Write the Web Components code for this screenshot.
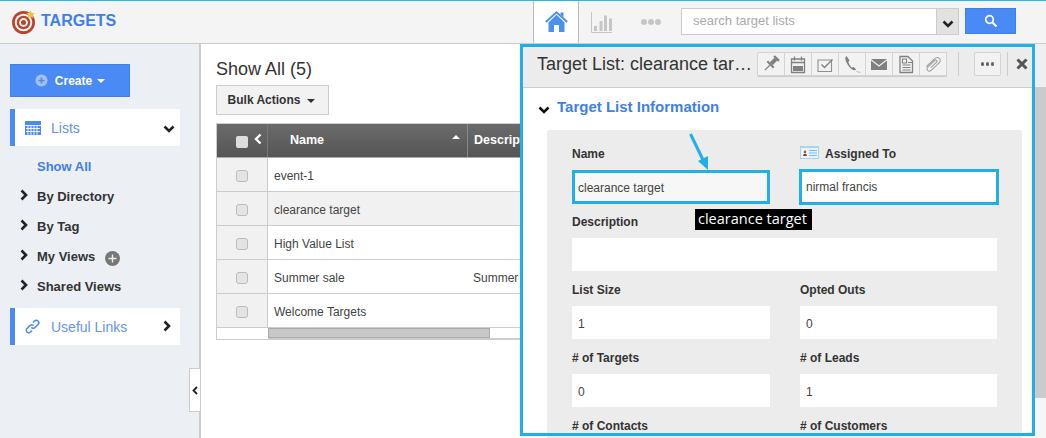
<!DOCTYPE html>
<html>
<head>
<meta charset="utf-8">
<title>Targets</title>
<style>
  html, body { margin: 0; padding: 0; height: 100%; overflow: hidden; background: #fff; }
  body { font-family: "Liberation Sans", Arial, sans-serif; color: #333; }
</style>
</head>
<body>
<crm-app></crm-app>
<script>
const CHEV_DOWN = `<svg width="12" height="8" viewBox="0 0 12 8"><path d="M1.5 1.5 6 6l4.500-4.500" fill="none" stroke="currentColor" stroke-width="2.600"/></svg>`;
const CHEV_RIGHT = `<svg width="8" height="12" viewBox="0 0 8 12"><path d="M1.500 1.500 6 6l-4.500 4.500" fill="none" stroke="currentColor" stroke-width="2.600"/></svg>`;

const ICONS = {
  pin: `<g transform="rotate(45 10 10)" fill="#808080"><rect x="6.500" y="1" width="7" height="2.200"/><rect x="8" y="3.200" width="4" height="6.500"/><rect x="5.500" y="9.700" width="9" height="2"/><rect x="9.400" y="11.700" width="1.200" height="7"/></g>`,
  cal: `<path d="M3.500 5h13v13.500h-13zM6.500 2.500v4M13.500 2.500v4M3.500 8.500h13" fill="none" stroke="#808080" stroke-width="1.300"/><rect x="5" y="12" width="10" height="5" fill="#808080"/>`,
  task: `<path d="M3 6h13.500v11.500H3z" fill="none" stroke="#909090" stroke-width="1.100"/><path d="M6.500 10.500l3 3 8-8" fill="none" stroke="#808080" stroke-width="1.400"/>`,
  phone: `<path d="M4.500 2c-1.500 1-1.500 3-.5 5.500 1.500 3.500 4 7 7 8.500 1.300.6 2.300.4 3.200-.4l-2.700-2.800-1.500 1C8.500 12.500 7 10 6.300 8l1.300-1.500z" fill="#808080"/><path d="M14.500 17.500l4 1" stroke="#bbb" stroke-width="1"/>`,
  mail: `<path d="M2 5h16l-8 6.200z" fill="#808080"/><path d="M2 6.500V16h16V6.500l-8 6.200z" fill="#808080"/>`,
  note: `<path d="M4 2.500h8l4.500 4.500v11.500H4z" fill="none" stroke="#808080" stroke-width="1.300"/><path d="M6.500 5h4v4h-4zM6.500 11h8M6.500 13.500h8M6.500 16h8M12 8.500h4.500" fill="none" stroke="#808080" stroke-width="1.100"/>`,
  clip: `<path d="M3.500 12.500l8-7.500c1.600-1.500 3.800-1.700 5-.6s1 3.300-.6 4.800l-7.500 7c-1.100 1-2.900 1.100-3.800.2s-.7-2.500.4-3.500l6.700-6.300c.7-.6 1.500-.7 2-.2s.4 1.300-.3 2l-5.600 5.300" fill="none" stroke="#a0a0a0" stroke-width="1.100"/>`
};

// shared base: every element only has to hand over its shadow markup
class ShadowEl extends HTMLElement {
  constructor() {
    super();
    this.attachShadow({ mode: "open" });
  }
  connectedCallback() {
    this.shadowRoot.innerHTML = this.markup();
  }
  markup() { return ""; }
}

class CrmApp extends ShadowEl {
  markup() {
    return `<style>
      :host { display: flex; flex-direction: column; width: 1046px; height: 438px; position: relative; overflow: hidden; }
      .below { display: flex; flex: 1; min-height: 0; }
      .gutter { position: absolute; left: 1035px; top: 44px; width: 11px; bottom: 0; background: #f6f6f6; }
      .gutter .cap { height: 43px; background: #efefef; }
      .gutter .thumb { height: 311px; background: #cbcbcb; }
    </style>
    <app-header></app-header>
    <div class="below">
      <side-nav></side-nav>
      <list-view></list-view>
    </div>
    <div class="gutter"><div class="cap"></div><div class="thumb"></div></div>
    <detail-panel></detail-panel>`;
  }
}

class AppHeader extends ShadowEl {
  markup() {
    return `<style>
      :host { display: flex; align-items: stretch; height: 44px; flex: none; box-sizing: border-box; border-top: 1px solid #29b6f0; border-bottom: 1px solid #ccc; background: #f4f4f4; }
      .brand { display: flex; align-items: center; gap: 5px; padding-left: 12px; width: 533px; box-sizing: border-box; font: bold 16px "Liberation Sans", sans-serif; color: #3f7fe8; }
      .brand span { position: relative; top: -1px; }
      .home { width: 46px; box-sizing: border-box; background: #fff; border-left: 1px solid #bbb; border-right: 1px solid #bbb; display: flex; align-items: center; justify-content: center; }
      .chart { margin: 0 0 0 12px; display: flex; align-items: center; }
      .dots { margin-left: 28px; display: flex; gap: 1px; align-items: center; }
      .dots i { width: 6px; height: 6px; border-radius: 50%; background: #c6c6c6; }
      .search { margin: 7px 0 0 20px; width: 278px; height: 27px; box-sizing: border-box; border: 1px solid #ccc; background: #fff; display: flex; font-size: 13px; color: #aaa; }
      .search .q { flex: 1; padding: 0 11px; line-height: 24px; }
      .search .dd { width: 22px; background: #e2e2e2; border-left: 1px solid #ccc; color: #222; display: flex; align-items: center; justify-content: center; padding-top: 4px; box-sizing: border-box; }
      .go { margin: 7px 0 0 6px; width: 51px; height: 26px; box-sizing: border-box; background: #4a8af4; border: 1px solid #3f7fe8; display: flex; align-items: center; justify-content: center; }
    </style>
    <div class="brand">
      <svg width="24" height="24" viewBox="0 0 24 24" style="margin-top:-1px">
        <circle cx="11.500" cy="12.500" r="11.500" fill="#b8452b"/>
        <circle cx="11.500" cy="12.500" r="8.800" fill="#f4f4f4"/>
        <circle cx="11.500" cy="12.500" r="6.800" fill="#b8452b"/>
        <circle cx="11.500" cy="12.500" r="4.400" fill="#f4f4f4"/>
        <circle cx="11.500" cy="12.500" r="2.500" fill="#b8452b"/>
        <path d="M18.500 0l1.200 2.800 3 .4-2.200 2 .6 3-2.600-1.500-2.600 1.500.6-3-2.200-2 3-.4z" fill="#f3c23c"/>
      </svg>
      <span>TARGETS</span>
    </div>
    <div class="home">
      <svg width="23" height="22" viewBox="0 0 23 22"><path d="M3.500 11.500 11.500 3.800 19.500 11.500V21h-5.500v-7H9v7H3.500z" fill="#4a90f0"/><path d="M.8 11 11.500 1.300 22.200 11" fill="none" stroke="#4a90f0" stroke-width="1.800"/><path d="M15.500 1.500h3v5l-3-3z" fill="#4a90f0"/></svg>
    </div>
    <div class="chart">
      <svg width="22" height="21" viewBox="0 0 22 21"><path d="M.5 0v20.500H21" fill="none" stroke="#c6c6c6"/><path d="M3 14h3v5H3zM8.500 9h3v10h-3zM13 3.500h3V19h-3zM18 6.500h3V19h-3z" fill="#c6c6c6"/></svg>
    </div>
    <div class="dots"><i></i><i></i><i></i></div>
    <div class="search"><div class="q">search target lists</div><div class="dd">${CHEV_DOWN}</div></div>
    <div class="go">
      <svg width="14" height="14" viewBox="0 0 14 14"><circle cx="5.500" cy="5.500" r="3.800" fill="none" stroke="#fff" stroke-width="1.800"/><path d="M8.500 8.500l4 4" stroke="#fff" stroke-width="2.200"/></svg>
    </div>`;
  }
}

class NavCard extends ShadowEl {
  markup() {
    return `<style>
      :host { display: flex; align-items: center; height: 37px; width: 170px; box-sizing: border-box; background: #fff; border-left: 5px solid #4a8af4; padding-left: 10px; font-size: 14px; color: #6493f0; }
      .ic { width: 16px; display: flex; }
      .t { flex: 1; margin-left: 10px; }
      .c { color: #222; width: 17px; display: flex; }
    </style>
    <span class="ic"><slot name="icon"></slot></span><span class="t"><slot></slot></span><span class="c"><slot name="caret"></slot></span>`;
  }
}

class NavItem extends ShadowEl {
  markup() {
    return `<style>
      :host { display: flex; align-items: center; height: 30px; font: bold 13px "Liberation Sans", sans-serif; color: #333; padding-left: 20px; }
      .c { width: 17px; display: flex; color: #222; }
      .g { margin: 5px 0 0 10px; display: flex; }
    </style>
    <span class="c"><slot name="caret"></slot></span><slot></slot><span class="g"><slot name="extra"></slot></span>`;
  }
}

class SideNav extends ShadowEl {
  markup() {
    return `<style>
      :host { display: block; width: 201px; flex: none; box-sizing: border-box; background: #eceff4; border-right: 2px solid #ccc; padding: 20px 0 0 10px; position: relative; }
      .create { width: 120px; height: 33px; box-sizing: border-box; background: #4a8af4; border: 1px solid #3f7fe8; color: #fff; font: bold 12px "Liberation Sans", sans-serif; display: flex; align-items: center; justify-content: center; gap: 7px; }
      .tri { width: 0; height: 0; border: 4px solid transparent; border-top-color: #fff; border-bottom: 0; display: inline-block; margin-left: 5px; vertical-align: 2px; }
      nav-card { margin-top: 12px; }
      nav-card.links { margin-top: 7px; }
      .items { margin: 5px 0 0 -10px; }
      .handle { position: absolute; left: 189px; top: 324px; width: 11px; height: 44px; box-sizing: border-box; background: #fff; border: 1px solid #ccc; border-right: 0; display: flex; align-items: center; justify-content: center; color: #222; }
    </style>
    <div class="create">
      <svg width="13" height="13" viewBox="0 0 13 13"><circle cx="6.500" cy="6.500" r="6" fill="#a3c1f7"/><path d="M6.500 3.500v6M3.500 6.500h6" stroke="#4a8af4" stroke-width="1.600"/></svg>
      <span>Create<i class="tri"></i></span>
    </div>
    <nav-card>
      <svg slot="icon" width="16" height="14" viewBox="0 0 16 14"><path d="M0 0h16v14H0z" fill="#4a8af4"/><path d="M0 4.500h16M1 7.500h14M1 10.500h14M3 4v10M6 4v10M9 4v10M12 4v10" stroke="#fff" stroke-width=".9"/></svg>
      Lists
      <span slot="caret">${CHEV_DOWN}</span>
    </nav-card>
    <div class="items">
      <nav-item><span style="color:#3f7fe8">Show All</span></nav-item>
      <nav-item><span slot="caret">${CHEV_RIGHT}</span>By Directory</nav-item>
      <nav-item><span slot="caret">${CHEV_RIGHT}</span>By Tag</nav-item>
      <nav-item><span slot="caret">${CHEV_RIGHT}</span>My Views
        <svg slot="extra" width="15" height="15" viewBox="0 0 15 15"><circle cx="7.500" cy="7.500" r="7.500" fill="#777"/><path d="M7.500 3.500v8M3.500 7.500h8" stroke="#eee" stroke-width="1.400"/></svg>
      </nav-item>
      <nav-item><span slot="caret">${CHEV_RIGHT}</span>Shared Views</nav-item>
    </div>
    <nav-card class="links">
      <svg slot="icon" width="15" height="15" viewBox="0 0 15 15"><path d="M6.500 8.500c1 1 2.500 1 3.500 0l3-3c1-1 1-2.500 0-3.500s-2.500-1-3.500 0L8 3.500M8.500 6.500c-1-1-2.500-1-3.500 0l-3 3c-1 1-1 2.500 0 3.500s2.500 1 3.500 0L7 11.500" fill="none" stroke="#4a8af4" stroke-width="1.600"/></svg>
      Useful Links
      <span slot="caret">${CHEV_RIGHT}</span>
    </nav-card>
    <div class="handle"><svg width="6" height="9" viewBox="0 0 6 9"><path d="M5 1 1.500 4.500 5 8" fill="none" stroke="currentColor" stroke-width="1.800"/></svg></div>`;
  }
}

class TableRow extends ShadowEl {
  markup() {
    const shade = this.hasAttribute("shade");
    return `<style>
      :host { display: grid; grid-template-columns: 51px 200px 1fr; height: 34px; box-sizing: border-box; border-bottom: 1px solid #ccc; font-size: 12px; color: #444; background: ${shade ? "#f1f1f1" : "#fff"}; }
      .chk { background: #f1f1f1; border-right: 1px solid #ccc; display: flex; align-items: center; justify-content: center; padding-top: 3px; box-sizing: border-box; }
      .chk i { width: 12px; height: 12px; box-sizing: border-box; border: 1px solid #bbb; border-radius: 3px; background: #e4e4e4; }
      div { display: flex; align-items: center; }
      .n { padding: 3px 0 0 6px; }
      .d { padding: 3px 0 0 5px; white-space: nowrap; }
    </style>
    <div class="chk"><i></i></div><div class="n"><slot></slot></div><div class="d"><slot name="desc"></slot></div>`;
  }
}

class ListView extends ShadowEl {
  markup() {
    return `<style>
      :host { display: block; flex: 1; padding: 15px 0 0 15px; background: #fff; }
      h1 { margin: 0; font: 18px/21px "Liberation Sans", sans-serif; color: #333; }
      .bulk { margin-top: 5px; width: 113px; height: 30px; box-sizing: border-box; background: #f2f2f2; border: 1px solid #ccc; padding-right: 2px; font: bold 12px "Liberation Sans", sans-serif; color: #333; display: flex; align-items: center; justify-content: center; gap: 7px; }
      .bulk i { border: 4px solid transparent; border-top-color: #333; border-bottom: 0; margin-top: 2px; }
      .table { margin-top: 8px; width: 315px; border-left: 1px solid #ccc; }
      .head { display: grid; grid-template-columns: 51px 200px 1fr; height: 35px; box-sizing: border-box; border-top: 1px solid #ccc; border-bottom: 1px solid #aaa; background: linear-gradient(#6b6b6b, #555); color: #fff; font: bold 12.500px "Liberation Sans", sans-serif; }
      .head > div { display: flex; align-items: center; box-sizing: border-box; white-space: nowrap; overflow: hidden; padding-bottom: 2px; }
      .c1 { padding-left: 19px; gap: 6px; border-right: 1px solid #777; }
      .c1 i { width: 12px; height: 12px; background: #ddd; border-radius: 2px; margin-top: 4px; }
      .c1 svg { margin-top: -1px; }
      .c2 { padding-left: 22px; justify-content: space-between; padding-right: 7px; border-right: 1px solid #888; }
      .c2 b { border: 4px solid transparent; border-bottom-color: #fff; border-top: 0; margin-top: -6px; }
      .c3 { padding-left: 6px; }
      .bar { height: 11px; box-sizing: border-box; margin-left: 51px; background: #fff; border-bottom: 1px solid #ccc; width: 264px; }
      .bar i { display: block; width: 222px; height: 10px; box-sizing: border-box; background: #c8c8c8; border: 1px solid #aaa; }
      .rule { border-bottom: 1px solid #ccc; margin-left: -1px; height: 0; width: 316px; }
    </style>
    <h1>Show All (5)</h1>
    <div class="bulk">Bulk Actions <i></i></div>
    <div class="table">
      <div class="head">
        <div class="c1"><i></i><svg width="8" height="12" viewBox="0 0 8 12"><path d="M6.500 1.500 2 6l4.500 4.500" fill="none" stroke="#fff" stroke-width="2.400"/></svg></div>
        <div class="c2">Name<b></b></div>
        <div class="c3">Description</div>
      </div>
      <table-row>event-1</table-row>
      <table-row shade>clearance target</table-row>
      <table-row>High Value List</table-row>
      <table-row>Summer sale<span slot="desc">Summer sale</span></table-row>
      <table-row>Welcome Targets</table-row>
      <div class="bar"><i></i></div>
      <div class="rule"></div>
    </div>`;
  }
}

class ToolBtn extends ShadowEl {
  markup() {
    return `<style>
      :host { display: flex; width: 27px; height: 24px; box-sizing: border-box; align-items: center; justify-content: center; background: #f2f2f2; border: 1px solid #d4d4d4; border-left-width: 0; box-shadow: 0 1px 0 #ccc; }
      :host(:first-child) { width: 28px; border-left-width: 1px; border-radius: 2px 0 0 2px; }
    </style>
    <svg width="20" height="20" viewBox="0 0 20 20">${ICONS[this.getAttribute("icon")] || ""}</svg>`;
  }
}

class FormField extends ShadowEl {
  markup() {
    const mark = this.getAttribute("mark");
    const box = mark === "big"
      ? "height: 36px; margin: 7px -2px 0 -1px; border: 3px solid #1fb0e8; padding-left: 4px;"
      : mark === "small"
        ? "height: 34px; margin-top: 8px; border: 3px solid #1fb0e8; padding: 1px 0 0 3px;"
        : "height: 33px; margin-top: 8px; padding: 2px 0 0 6px;";
    return `<style>
      :host { display: block; height: 68px; ${this.hasAttribute("wide") ? "grid-column: 1 / 3;" : ""} }
      .l { height: 16px; box-sizing: border-box; display: flex; align-items: center; gap: 6px; font: bold 12px "Liberation Sans", sans-serif; color: #333; white-space: nowrap; }
      .v { box-sizing: border-box; ${box} background: ${this.getAttribute("fill") || "#fff"}; display: flex; align-items: center; font-size: 12px; color: #444; }
    </style>
    <div class="l"><slot name="icon"></slot>${this.getAttribute("label")}</div>
    <div class="v"><slot></slot></div>`;
  }
}

class DetailPanel extends ShadowEl {
  markup() {
    const tools = ["pin", "cal", "task", "phone", "mail", "note", "clip"]
      .map(i => `<tool-btn icon="${i}"></tool-btn>`).join("");
    return `<style>
      :host { position: absolute; left: 520px; top: 44px; width: 515px; height: 394px; box-sizing: border-box; padding: 3px 3px 0; background: #fff; overflow: hidden; display: flex; flex-direction: column; }
      .top { flex: none; height: 41px; box-sizing: border-box; background: #ececec; border-bottom: 1px solid #ccc; display: flex; align-items: center; padding: 0 0 6px 14px; }
      .title { width: 219px; font: 18px "Liberation Sans", sans-serif; color: #333; white-space: nowrap; overflow: hidden; text-overflow: ellipsis; flex: none; }
      .tools { display: flex; margin-left: 1px; }
      .sep { width: 1px; height: 24px; background: #ccc; margin: 0 15px 0 11px; }
      .sep.b { margin: 0 8px 0 6px; }
      .more { width: 27px; height: 24px; box-sizing: border-box; background: #f2f2f2; border: 1px solid #d4d4d4; border-radius: 2px; display: flex; align-items: center; justify-content: center; gap: 1.500px; }
      .more i { width: 3.500px; height: 3.500px; border-radius: 50%; background: #666; }
      .sec { flex: none; display: flex; align-items: center; gap: 7px; margin: 8px 0 0 15px; font: bold 15px "Liberation Sans", sans-serif; color: #3f7fe8; height: 20px; }
      .sec svg { color: #111; margin-top: 7px; }
      .form { margin: 14px 10px 0 24px; background: #ececec; padding: 16px 25px 0 25px; display: grid; grid-template-columns: 198px 197px; column-gap: 30px; flex: 1; align-content: start; border-radius: 2px 2px 0 0; }
      .box { position: absolute; left: 0; top: 0; right: 0; bottom: 2px; border: 3px solid #1fb0e8; pointer-events: none; }
      .tip { position: absolute; left: 175px; top: 165px; background: #000; color: #fff; font: 14.500px "Open Sans", sans-serif; padding: 0 3px; height: 21px; line-height: 20px; width: 117px; box-sizing: border-box; white-space: nowrap; }
      .arrow { position: absolute; left: 163px; top: 87px; }
    </style>
    <div class="top">
      <div class="title">Target List: clearance target</div>
      <div class="tools">${tools}</div>
      <div class="sep"></div>
      <div class="more"><i></i><i></i><i></i></div>
      <div class="sep b"></div>
      <svg width="12" height="12" viewBox="0 0 12 12"><path d="M1.500 1.500l9 9M10.500 1.500l-9 9" stroke="#555" stroke-width="3"/></svg>
    </div>
    <div class="sec">${CHEV_DOWN}<span>Target List Information</span></div>
    <div class="form">
      <form-field label="Name" mark="small" fill="#f7f7f7">clearance target</form-field>
      <form-field label="Assigned To" mark="big">
        <svg slot="icon" width="19" height="13" viewBox="0 0 19 13" style="margin-top:-3px"><path d="M0 0h19v13H0z" fill="#a8d4f5"/><path d="M1 2h17v10H1z" fill="#e8f4fc"/><path d="M2.500 3.500h5v7h-5z" fill="#fff"/><circle cx="5" cy="6" r="1.400" fill="#b5553c"/><path d="M3 10c0-3 4-3 4 0z" fill="#933"/><path d="M9 4.500h8M9 7h8M9 9.500h8" stroke="#7bbcec"/></svg>
        nirmal francis
      </form-field>
      <form-field label="Description" wide></form-field>
      <form-field label="List Size">1</form-field>
      <form-field label="Opted Outs">0</form-field>
      <form-field label="# of Targets">0</form-field>
      <form-field label="# of Leads">1</form-field>
      <form-field label="# of Contacts"></form-field>
      <form-field label="# of Customers"></form-field>
    </div>
    <div class="box"></div>
    <svg class="arrow" width="36" height="46" viewBox="0 0 36 46"><path d="M7.500 3 22 33" stroke="#1fb0e8" stroke-width="3" fill="none"/><path d="M25 39 15 30 25 25z" fill="#1fb0e8"/></svg>
    <div class="tip">clearance target</div>`;
  }
}

customElements.define("crm-app", CrmApp);
customElements.define("app-header", AppHeader);
customElements.define("nav-card", NavCard);
customElements.define("nav-item", NavItem);
customElements.define("side-nav", SideNav);
customElements.define("table-row", TableRow);
customElements.define("list-view", ListView);
customElements.define("tool-btn", ToolBtn);
customElements.define("form-field", FormField);
customElements.define("detail-panel", DetailPanel);
</script>
</body>
</html>
